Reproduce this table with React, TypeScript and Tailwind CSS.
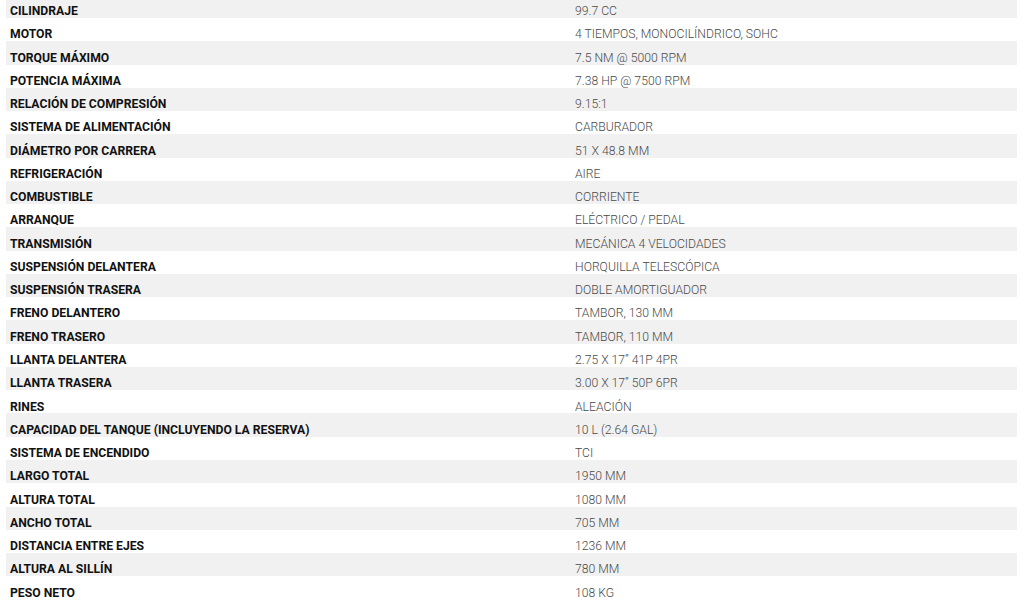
const specs: [string, string][] = [
  ["CILINDRAJE", "99.7 CC"],
  ["MOTOR", "4 TIEMPOS, MONOCILÍNDRICO, SOHC"],
  ["TORQUE MÁXIMO", "7.5 NM @ 5000 RPM"],
  ["POTENCIA MÁXIMA", "7.38 HP @ 7500 RPM"],
  ["RELACIÓN DE COMPRESIÓN", "9.15:1"],
  ["SISTEMA DE ALIMENTACIÓN", "CARBURADOR"],
  ["DIÁMETRO POR CARRERA", "51 X 48.8 MM"],
  ["REFRIGERACIÓN", "AIRE"],
  ["COMBUSTIBLE", "CORRIENTE"],
  ["ARRANQUE", "ELÉCTRICO / PEDAL"],
  ["TRANSMISIÓN", "MECÁNICA 4 VELOCIDADES"],
  ["SUSPENSIÓN DELANTERA", "HORQUILLA TELESCÓPICA"],
  ["SUSPENSIÓN TRASERA", "DOBLE AMORTIGUADOR"],
  ["FRENO DELANTERO", "TAMBOR, 130 MM"],
  ["FRENO TRASERO", "TAMBOR, 110 MM"],
  ["LLANTA DELANTERA", "2.75 X 17” 41P 4PR"],
  ["LLANTA TRASERA", "3.00 X 17” 50P 6PR"],
  ["RINES", "ALEACIÓN"],
  ["CAPACIDAD DEL TANQUE (INCLUYENDO LA RESERVA)", "10 L (2.64 GAL)"],
  ["SISTEMA DE ENCENDIDO", "TCI"],
  ["LARGO TOTAL", "1950 MM"],
  ["ALTURA TOTAL", "1080 MM"],
  ["ANCHO TOTAL", "705 MM"],
  ["DISTANCIA ENTRE EJES", "1236 MM"],
  ["ALTURA AL SILLÍN", "780 MM"],
  ["PESO NETO", "108 KG"],
];

export default function App() {
  return (
    <div className="h-[606px] w-[1024px] overflow-hidden bg-white font-['Roboto',sans-serif]">
      <div className="-mt-[5.3px] ml-[6px] w-[1011px]">
        {specs.map(([label, value], i) => (
          <div
            key={label}
            className={`flex h-[23.28px] items-start pt-[9.3px] leading-[14px] ${i % 2 === 0 ? "bg-[#f1f1f1]" : "bg-white"}`}
          >
            <div className="w-[565px] pl-[4px] text-[12.2px] font-bold text-[#111]">{label}</div>
            <div className="pl-[4px] text-[12.2px] font-light text-[#4a4a4a]">{value}</div>
          </div>
        ))}
      </div>
    </div>
  );
}
